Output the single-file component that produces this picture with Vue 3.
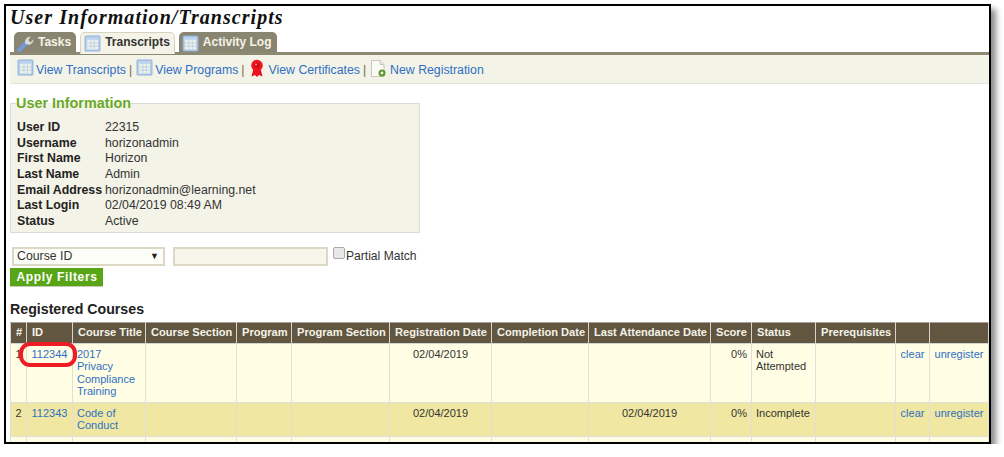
<script setup>
const info = [
  ['User ID', '22315'],
  ['Username', 'horizonadmin'],
  ['First Name', 'Horizon'],
  ['Last Name', 'Admin'],
  ['Email Address', 'horizonadmin@learning.net'],
  ['Last Login', '02/04/2019 08:49 AM'],
  ['Status', 'Active'],
]
const cols = [
  ['#', 16], ['ID', 46], ['Course Title', 73], ['Course Section', 91], ['Program', 55],
  ['Program Section', 98], ['Registration Date', 102], ['Completion Date', 97],
  ['Last Attendance Date', 122], ['Score', 41], ['Status', 64], ['Prerequisites', 80], ['', 34], ['', 59],
]
const rows = [
  { n: 1, id: '112344', title: '2017 Privacy Compliance Training', reg: '02/04/2019', att: '', score: '0%', status: 'Not Attempted', h: 59 },
  { n: 2, id: '112343', title: 'Code of Conduct', reg: '02/04/2019', att: '02/04/2019', score: '0%', status: 'Incomplete', h: 34 },
  { n: 3, id: '112342', title: 'Sales', reg: '02/04/2019', att: '', score: '0%', status: 'Incomplete', h: 34 },
]
</script>

<template>
  <div class="frame">
    <h1 class="title">User Information/Transcripts</h1>

    <nav class="tabs">
      <div class="tab">
        <svg class="ico" viewBox="0 0 16 16"><path d="M2.200 14 8.500 7.500" stroke="#6f9bd8" stroke-width="4" stroke-linecap="round" fill="none"/><path d="M8 8.200c-1.200-3.200 1-6.700 5.200-6.700l-2.400 2.700.5 1.800 1.900.5L15.300 4c.5 3.800-3.300 6.600-7.300 4.200z" fill="#dcdcd4"/></svg>
        <span>Tasks</span>
      </div>
      <div class="tab active">
        <svg class="ico" viewBox="0 0 16 16"><rect x="1" y="1" width="14" height="14" rx="1" fill="#b9d2ee" stroke="#8fb0d8"/><rect x="3" y="4.500" width="10" height="9" fill="#f2f2e4"/><path d="M6.500 4.500v9M9.700 4.500v9M3 7.500h10M3 10.500h10" stroke="#b5cde8" stroke-width=".8"/></svg>
        <span>Transcripts</span>
      </div>
      <div class="tab">
        <svg class="ico" viewBox="0 0 16 16"><rect x="1" y="1" width="14" height="14" rx="1" fill="#b9d2ee" stroke="#8fb0d8"/><rect x="3" y="4.500" width="10" height="9" fill="#f2f2e4"/><path d="M6.500 4.500v9M9.700 4.500v9M3 7.500h10M3 10.500h10" stroke="#b5cde8" stroke-width=".8"/></svg>
        <span>Activity Log</span>
      </div>
    </nav>

    <div class="toolbar">
      <svg class="tool-ico" viewBox="0 0 16 16"><rect x="1" y="1" width="14" height="14" rx="1" fill="#b9d2ee" stroke="#8fb0d8"/><rect x="3" y="4.500" width="10" height="9" fill="#f2f2e4"/><path d="M6.500 4.500v9M9.700 4.500v9M3 7.500h10M3 10.500h10" stroke="#b5cde8" stroke-width=".8"/></svg>
      <a class="link">View Transcripts</a><span class="sep">|</span>
      <svg class="tool-ico" viewBox="0 0 16 16"><rect x="1" y="1" width="14" height="14" rx="1" fill="#b9d2ee" stroke="#8fb0d8"/><rect x="3" y="4.500" width="10" height="9" fill="#f2f2e4"/><path d="M6.500 4.500v9M9.700 4.500v9M3 7.500h10M3 10.500h10" stroke="#b5cde8" stroke-width=".8"/></svg>
      <a class="link">View Programs</a><span class="sep">|</span>
      <svg class="tool-ico ribbon" viewBox="0 0 16 18"><path d="M4.500 9 2.500 17l3.500-1.500L8 17.500l2-2 3.500 1.500-2-8z" fill="#e8121c"/><circle cx="8" cy="6" r="5.800" fill="#f01620"/><circle cx="8" cy="6" r="2.700" fill="#c80d14"/><circle cx="7" cy="5" r="1" fill="#ff8a8a"/></svg>
      <a class="link">View Certificates</a><span class="sep">|</span>
      <svg class="tool-ico doc" viewBox="0 0 16 18"><path d="M1.500 1h8.500l4 4v12h-12.500z" fill="#fbfbf6" stroke="#c8c8c0"/><path d="M10 1v4h4" fill="#e8e8e0" stroke="#c8c8c0"/><circle cx="12" cy="13.500" r="3.500" fill="#5c9a2c"/><circle cx="12" cy="13.500" r="1.400" fill="#f4f3e8"/></svg>
      <a class="link">New Registration</a>
    </div>

    <fieldset class="user-info">
      <legend>User Information</legend>
      <div v-for="row in info" :key="row[0]" class="info-row">
        <b>{{ row[0] }}</b><span>{{ row[1] }}</span>
      </div>
    </fieldset>

    <div class="filters">
      <div class="select"><span>Course ID</span><i>▼</i></div>
      <input class="text-input" type="text" />
      <span class="check"></span>
      <span class="partial">Partial Match</span>
    </div>
    <button class="apply">Apply Filters</button>

    <h2 class="heading">Registered Courses</h2>

    <table class="courses">
      <colgroup><col v-for="(c, i) in cols" :key="i" :style="{ width: c[1] + 'px' }" /></colgroup>
      <thead>
        <tr><th v-for="(c, i) in cols" :key="i">{{ c[0] }}</th></tr>
      </thead>
      <tbody>
        <tr v-for="r in rows" :key="r.n" :class="{ even: r.n % 2 === 0 }" :style="{ height: r.h + 'px' }">
          <td class="center">{{ r.n }}</td>
          <td class="id-cell">
            <a class="link">{{ r.id }}</a>
            <span v-if="r.n === 1" class="ring"></span>
          </td>
          <td class="title-cell"><a class="link">{{ r.title }}</a></td>
          <td></td>
          <td></td>
          <td></td>
          <td class="center">{{ r.reg }}</td>
          <td></td>
          <td class="center">{{ r.att }}</td>
          <td class="right">{{ r.score }}</td>
          <td>{{ r.status }}</td>
          <td></td>
          <td class="center"><a class="link">clear</a></td>
          <td class="center"><a class="link">unregister</a></td>
        </tr>
      </tbody>
    </table>
  </div>
</template>

<style scoped>
.frame {
  box-sizing: border-box;
  width: 987px;
  height: 440px;
  margin: 4px 0 0 4px;
  border: 2px solid #000;
  background: #fff;
  overflow: hidden;
  padding: 0 0 0 4px;
  box-shadow: 5px 5px 6px rgba(0, 0, 0, 0.45);
  font: 12.3px/15.6px "Liberation Sans", Arial, sans-serif;
  color: #333;
}
.title {
  margin: 0;
  height: 26px;
  font: italic bold 20px/23px "Liberation Serif", serif;
  letter-spacing: 1.05px;
  color: #111;
}
.tabs {
  display: flex;
  align-items: flex-start;
  gap: 4px;
  height: 20px;
  padding: 0 0 0 4px;
  position: relative;
  z-index: 1;
}
.tab {
  box-sizing: border-box;
  height: 20px;
  display: flex;
  align-items: center;
  gap: 4px;
  padding: 2px 5px 0 3px;
  background: #8a8570;
  border-radius: 5px 5px 0 0;
  color: #f4f3e8;
  font-size: 12px;
  font-weight: bold;
}
.tab.active {
  height: 22px;
  padding: 1px 4px 2px 3px;
  background: #f4f3e8;
  border: 1px solid #d6d4c0;
  border-bottom: 0;
  color: #333;
}
.ico { width: 17px; height: 17px; flex: none; }
.toolbar {
  box-sizing: border-box;
  height: 32px;
  border-top: 3px solid #8c8871;
  border-bottom: 1px solid #e3e3e0;
  background: #f4f3e8;
  padding: 3px 0 0 7px;
  display: flex;
  align-items: center;
  white-space: nowrap;
}
.tool-ico { width: 17px; height: 17px; flex: none; margin: -6px 2px 0 0; }
.tool-ico.ribbon { width: 16px; height: 19px; margin: -5px 4px 0 0; }
.tool-ico.doc { width: 16px; height: 19px; margin: -5px 4px 0 0; }
.sep { margin: 0 4px 0 3px; color: #7a6a50; }
.link { color: #2f6fc4; text-decoration: none; }
.user-info {
  box-sizing: border-box;
  width: 410px;
  height: 138px;
  margin: 11px 0 0;
  padding: 9px 6px 0;
  border: 1px solid #dcdcd4;
  background: #f4f3e8;
}
.user-info legend {
  padding: 0;
  margin-left: -1px;
  font: bold 14.4px/16px "Liberation Sans", Arial, sans-serif;
  color: #6aaa28;
}
.info-row {
  display: flex;
  height: 15.7px;
  line-height: 15.7px;
  white-space: nowrap;
}
.info-row b { width: 88px; flex: none; color: #222; }
.filters {
  display: flex;
  align-items: flex-start;
  height: 21px;
  margin: 14px 0 0 2px;
}
.select {
  box-sizing: border-box;
  width: 153px;
  height: 19px;
  border: 2px solid #dcd8c4;
  background: #fdfdf8;
  display: flex;
  justify-content: space-between;
  align-items: center;
  padding: 0 4px 0 3px;
}
.select i { font-style: normal; font-size: 9px; color: #222; }
.text-input {
  box-sizing: border-box;
  width: 155px;
  height: 19px;
  margin: 0 0 0 8px;
  padding: 0;
  border: 2px solid #dcd8c4;
  background: #f7f6ea;
}
.check {
  box-sizing: border-box;
  width: 12px;
  height: 12px;
  margin-left: 5px;
  border: 1px solid #a9a9a9;
  border-radius: 2px;
  background: #e8e8e8;
}
.partial { margin: 2px 0 0 1px; font-size: 12.1px; }
.apply {
  display: block;
  box-sizing: border-box;
  width: 93px;
  height: 19px;
  padding: 0 0 0 1px;
  border: 0;
  border-bottom: 1px solid #c9c9b8;
  background: #58a618;
  color: #fff;
  font: bold 12px/17px "Liberation Sans", Arial, sans-serif;
  letter-spacing: 0.65px;
}
.heading {
  margin: 13px 0 0;
  height: 22px;
  font: bold 14.2px/18px "Liberation Sans", Arial, sans-serif;
  color: #222;
}
.courses {
  table-layout: fixed;
  width: 978px;
  border-collapse: collapse;
}
.courses th {
  box-sizing: border-box;
  height: 21px;
  padding: 0 0 0 5px;
  background: #625640;
  border: 1px solid #d5d5d0;
  border-top-color: #a8a294;
  color: #f4f3e8;
  font-size: 11.1px;
  font-weight: bold;
  text-align: left;
  white-space: nowrap;
}
.courses td {
  box-sizing: border-box;
  padding: 4px 4px;
  vertical-align: top;
  background: #fffde4;
  border: 1px solid #e0e0d8;
  font-size: 11px;
  line-height: 12.4px;
}
.courses tr.even td { background: #f0e8a2; }
.courses td.center { text-align: center; }
.courses td.right { text-align: right; }
.courses td.title-cell { padding-right: 8px; }
.id-cell { position: relative; text-align: center; }
.ring {
  position: absolute;
  left: -8px;
  top: -2px;
  width: 58px;
  height: 25px;
  box-sizing: border-box;
  border: 4px solid #ee1c25;
  border-radius: 11px;
  pointer-events: none;
}
</style>

<style>
html, body { background: #fff; overflow: hidden; }
</style>
